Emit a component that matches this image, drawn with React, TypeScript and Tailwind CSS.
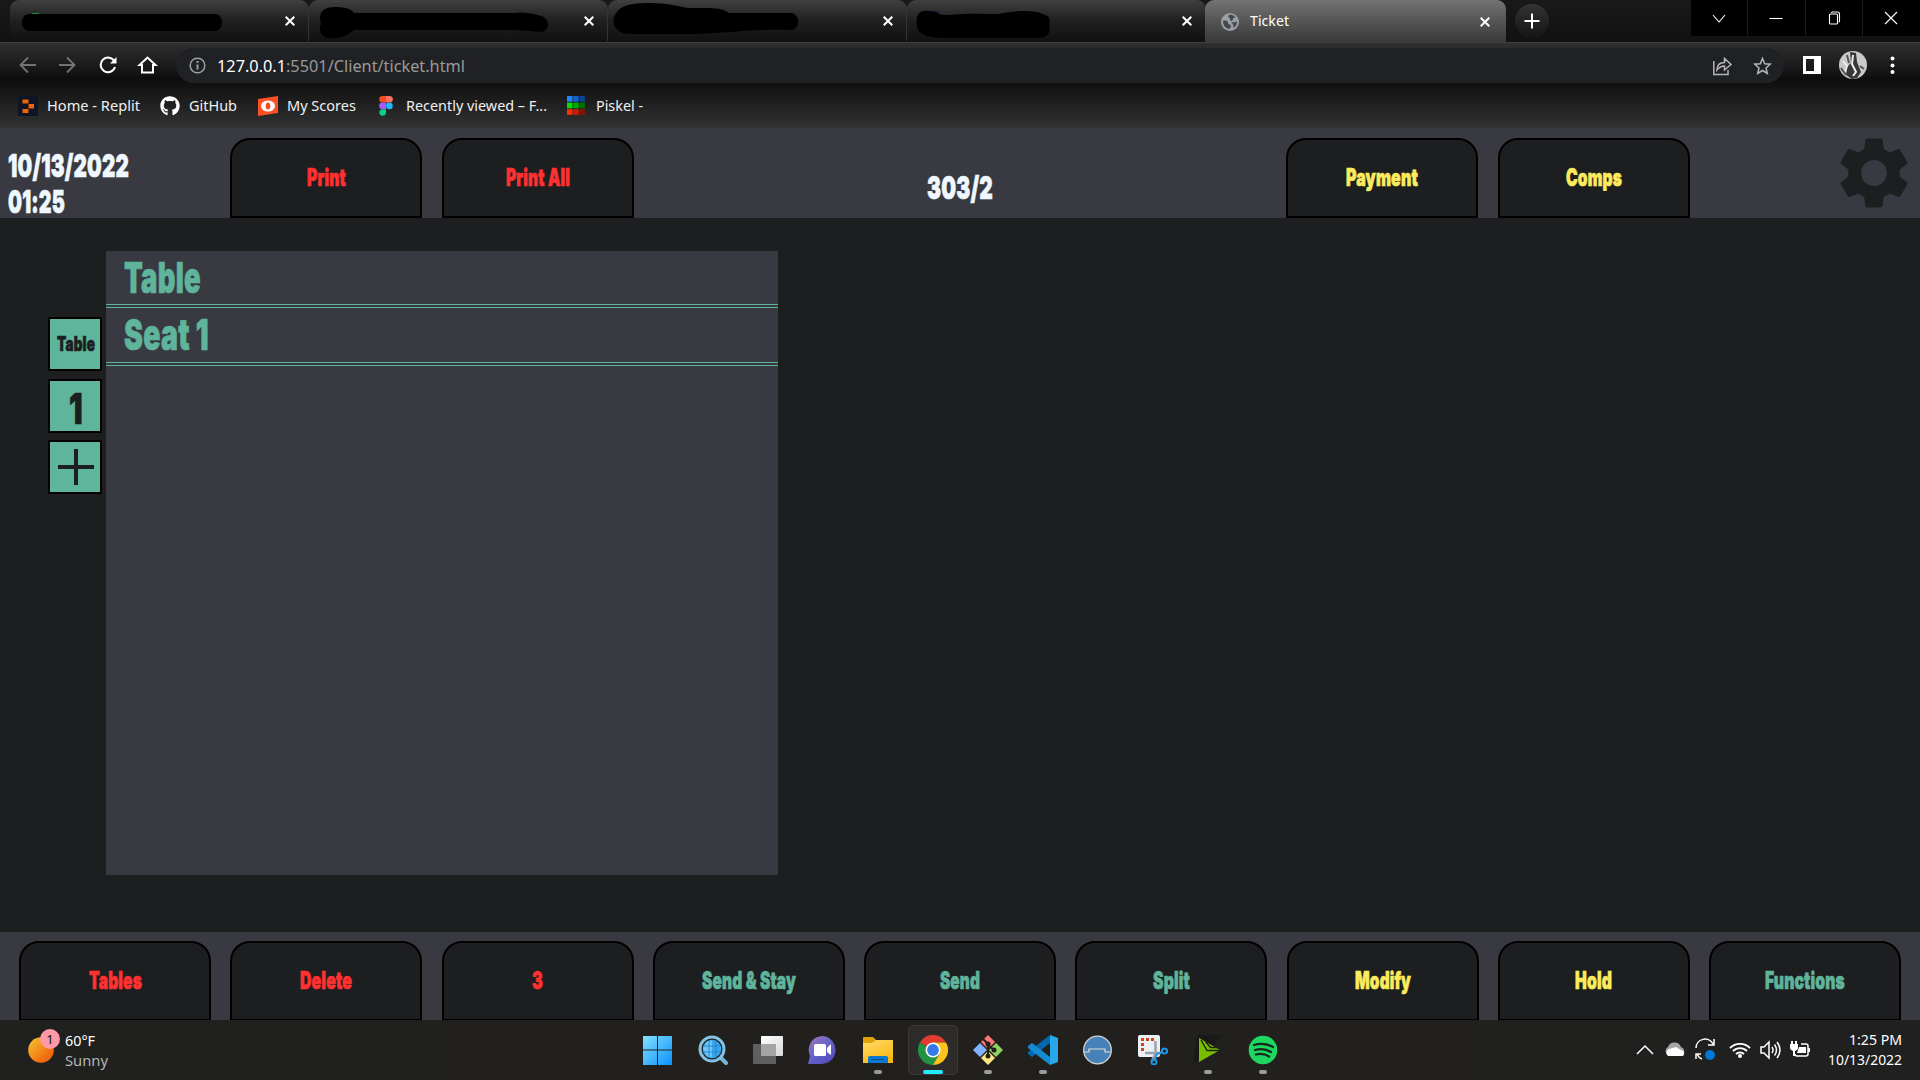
import { useLayoutEffect, useRef, type ReactNode } from "react";
import { MdSettings } from "react-icons/md";
import { FaGithub } from "react-icons/fa";

/** A single line of text, condensed or widened to an exact width. */
function Fit({ w, className = "", children }: { w: number; className?: string; children: ReactNode }) {
  const ref = useRef<HTMLSpanElement>(null);
  useLayoutEffect(() => {
    const el = ref.current;
    if (el) el.style.transform = `scaleX(${w / el.getBoundingClientRect().width})`;
    return () => {
      if (el) el.style.transform = "";
    };
  }, [w]);
  return (
    <span className={`flex shrink-0 justify-start whitespace-nowrap leading-none ${className}`} style={{ width: w }}>
      <span ref={ref} className="block shrink-0 origin-left">
        {children}
      </span>
    </span>
  );
}

const poster = "font-['Inter',sans-serif] font-black tracking-[0.01em] [-webkit-text-stroke:0.7px_currentColor]";
const ui = "font-['Noto_Sans',sans-serif]";

function Close() {
  return (
    <svg className="size-[10px] shrink-0" viewBox="0 0 10 10" stroke="#fff" strokeWidth="2">
      <path d="M.7.7l8.6 8.6M9.3.7L.7 9.3" />
    </svg>
  );
}

const scribbles = [
  "M18 14 H206 A9 9 0 0 1 206 31 H18 A9 9 0 0 1 18 14Z",
  "M26 7 C36 7 42 9 45 13 H205 C218 12 225 14 232 16 C241 18 242 31 231 32 C220 31 210 30 195 30 H45 C38 36 30 39 20 38 C10 37 10 28 12 24 C9 14 13 7 26 7Z",
  "M25 4 C50 1 65 5 80 8 C105 8 112 7 121 13 H184 A9 9 0 0 1 184 30 C145 29 120 33 90 34 H22 C-1 34 0 7 25 4Z",
  "M22 11 C30 10 30 16 42 15 C60 13 75 14 92 14 C107 10 130 10 135 14 C144 16 143 20 142 24 C145 36 138 38 130 38 H45 C12 39 8 32 10 17 C12 11 17 10 22 11Z",
];

function OldTab({ i }: { i: number }) {
  return (
    <div className="flex h-[41px] w-[299px] shrink-0 items-center justify-between rounded-t-[9px] border-r border-[#333] bg-gradient-to-b from-[#404040] via-[#202020] to-[#111] pr-[13px]">
      <svg className="h-[41px] w-[245px] shrink-0" viewBox="0 0 245 41">
        {i === 0 && <path d="M22 13h7v3h-7z" fill="#238a36" />}
        {i === 3 && <path d="M24 11h8v6h-8z" fill="#13213a" />}
        <path d={scribbles[i]} fill="#000" />
      </svg>
      <Close />
    </div>
  );
}

function TabStrip() {
  return (
    <div className="flex h-[42px] shrink-0 bg-gradient-to-b from-[#191919] to-[#111] pl-[10px]">
      {[0, 1, 2, 3].map((i) => (
        <OldTab key={i} i={i} />
      ))}
      <div className="ml-[-1px] flex h-[43px] w-[301px] shrink-0 items-center rounded-t-[9px] bg-gradient-to-b from-[#737373] to-[#383838] pl-[16px] pr-[16px]">
        <svg className="size-[18px]" viewBox="0 0 18 18">
          <circle cx="9" cy="9" r="9" fill="#9aa0a6" />
          <path d="M2 8c3-1 5 0 5 2s3 1 3 3-1 2-2 3C4 15 2 12 2 8zM8 2c3-.6 5 .5 6.500 2.500L12 5v2l-2 1-1-1V5L7 4zM10 9l4 .5L16 8c0 4-1 5-4 7 1-3 0-4-2-6z" fill="#45484b" />
        </svg>
        <Fit w={39} className={`${ui} -mt-[2px] ml-[11px] text-[15px] text-white`}>Ticket</Fit>
        <div className="ml-auto"><Close /></div>
      </div>
      <div className="ml-[9px] mt-[4px] flex size-[34px] items-center justify-center rounded-full bg-gradient-to-b from-[#333] to-[#151515]">
        <svg className="size-[16px]" viewBox="0 0 16 16" stroke="#fff" strokeWidth="2"><path d="M8 .5v15M.5 8h15" /></svg>
      </div>
      <div className="ml-auto grid h-[36px] w-[229px] grid-cols-4 divide-x divide-[#1b1b1b] bg-black">
        {["M2 5l6 7 6-7", "M1.500 8.500h13", "M3.500 5q0-1 1-1h6q1 0 1 1v8q0 1-1 1h-6q-1 0-1-1zM5.500 3q0-1 1-1h5q2 0 2 2v7q0 1-1 1", "M2 2l12 12M14 2L2 14"].map((d) => (
          <div key={d} className="flex items-center justify-center">
            <svg className="size-[16px]" viewBox="0 0 16 16" fill="none" stroke="#fff" strokeWidth="1.100"><path d={d} /></svg>
          </div>
        ))}
      </div>
    </div>
  );
}

function Toolbar() {
  return (
    <div className="flex h-[35px] shrink-0 items-start border-t border-[#414141] bg-gradient-to-b from-[#303030] to-[#101010]">
      <div className="flex h-[35px] w-[176px] items-center border-b border-[#1f1f1f] pl-[19px]">
        <svg className="h-[18px] w-[140px] translate-y-[5px]" viewBox="0 0 140 18" fill="none" strokeWidth="1.800">
          <g stroke="#747474"><path d="M17 9H2M9 1.500L1.500 9 9 16.500" /><path d="M40 9h15M48 1.500L55.500 9 48 16.500" /></g>
          <g stroke="#fff" strokeWidth="2">
            <path d="M95.500 5.500A7.300 7.300 0 1 0 96 11" />
            <path d="M97.500 1v6.500H91z" fill="#fff" stroke="none" />
            <path d="M123 16.500V9h-2.500L128.500 1.500 136.500 9H134v7.500z" />
          </g>
        </svg>
      </div>
      <div className={`relative mt-[5px] flex h-[35px] w-[1608px] items-center rounded-full bg-[#202124] pl-[13px] pr-[12px] ${ui}`}>
        <svg className="size-[17px]" viewBox="0 0 17 17" fill="none" stroke="#9aa0a6" strokeWidth="1.500"><circle cx="8.500" cy="8.500" r="7.300" /><path d="M8.500 7.500v5M8.500 4v2" strokeWidth="2" /></svg>
        <Fit w={248} className="-mt-px ml-[11px] text-[17px] text-[#9a9a9a]"><span className="text-white">127.0.0.1</span>:5501/Client/ticket.html</Fit>
        <svg className="ml-auto h-[20px] w-[60px]" viewBox="0 0 60 20" fill="none" stroke="#b5b6b8" strokeWidth="1.500">
          <path d="M1.800 5v13.500H16V14M5 14C5 9 8 6.500 12.500 6.500V2.500l6.500 6-6.500 5.500V10C9 10 7 11.500 5 14z" />
          <path d="M50.500 2.500l2.200 5.200 5.500.5-4.200 3.700 1.300 5.500-4.800-2.900-4.800 2.900 1.300-5.500-4.200-3.700 5.500-.5z" />
        </svg>
      </div>
      <div className="flex h-[35px] flex-1 items-center border-b border-[#1f1f1f] pl-[19px]">
        <svg className="h-[30px] w-[96px] translate-y-[5px]" viewBox="0 0 96 30">
          <path d="M0 6h18v18H0zM3 9v12h8V9z" fill="#fff" fillRule="evenodd" />
          <circle cx="50" cy="15" r="14" fill="#c9c9c9" />
          <path d="M47 2l6 1 1 9 4 10-4 6-5 1-6-4 1-8 4-4z" fill="#373737" />
          <path d="M50 5l-1 9 4 8-3 4M40 11l4 5-2 6" stroke="#eee" strokeWidth="2" fill="none" />
          <path d="M38 18l5 7M57 16l4 3M44 5l2 8" stroke="#555" strokeWidth="2" />
          <g fill="#fff"><circle cx="89.500" cy="8.500" r="2" /><circle cx="89.500" cy="15.500" r="2" /><circle cx="89.500" cy="22" r="2" /></g>
        </svg>
      </div>
    </div>
  );
}

function Bookmarks() {
  return (
    <div className={`flex h-[51px] shrink-0 items-center border-b border-[#343232] bg-gradient-to-b from-[#0c0c0c] to-[#323232] pl-[18px] pt-[7px] text-[15px] text-[#f0f0f0] ${ui}`}>
      <svg className="size-[20px]" viewBox="0 0 20 20"><path d="M0 0h20v20H0z" fill="#0e1525" /><path d="M4.500 3.500h6v4h-6zM10.500 8h5.500v4.500h-5.500zM4.500 13h6v4h-6z" fill="#f26207" /></svg>
      <Fit w={93} className="ml-[9px]">Home - Replit</Fit>
      <FaGithub className="ml-[20px] size-[20px] text-white" />
      <Fit w={48} className="ml-[9px]">GitHub</Fit>
      <svg className="ml-[21px] size-[20px]" viewBox="0 0 20 20"><path d="M0 3L20 0v17L0 20z" fill="#ff4f24" /><ellipse cx="10" cy="10" rx="7" ry="5.500" fill="#fff" /><ellipse cx="10" cy="10" rx="2.300" ry="3.500" fill="#f34a22" /></svg>
      <Fit w={69} className="ml-[9px]">My Scores</Fit>
      <svg className="ml-[23px] h-[20px] w-[14px]" viewBox="0 0 14 20"><path d="M7 0H3.500a3.300 3.300 0 0 0 0 6.600H7z" fill="#f24e1e" /><path d="M7 0h3.500a3.300 3.300 0 0 1 0 6.600H7z" fill="#ff7262" /><path d="M7 6.600H3.500a3.300 3.300 0 0 0 0 6.600H7z" fill="#a259ff" /><circle cx="10.400" cy="9.900" r="3.300" fill="#1abcfe" /><path d="M7 13.200H3.500A3.300 3.300 0 1 0 7 16.600z" fill="#0acf83" /></svg>
      <Fit w={141} className="ml-[13px]">Recently viewed – F...</Fit>
      <svg className="ml-[20px] h-[19px] w-[18px]" viewBox="0 0 18 19">
        {["#1d83ff", "#1262cf", "#0b4491", "#00e000", "#00aa00", "#007000", "#ff2c05", "#c81f00", "#841600"].map((c, i) => (
          <path key={c} d={`M${(i % 3) * 6.2} ${Math.floor(i / 3) * 6.600}h5.500v5.700h-5.500z`} fill={c} />
        ))}
      </svg>
      <Fit w={47} className="ml-[11px]">Piskel -</Fit>
    </div>
  );
}

function Key({ label, w, color }: { label: string; w: number; color: string }) {
  return (
    <button className={`flex h-[80px] w-[192px] shrink-0 items-center justify-center rounded-t-[20px] border-2 border-black bg-[#1d1e20] text-[24px] ${poster} ${color}`}>
      <Fit w={w}>{label}</Fit>
    </button>
  );
}

const red = "text-[#ff3131]";
const green = "text-[#5fb49c]";
const yellow = "text-[#fcec5d]";

function Header() {
  return (
    <header className="flex h-[90px] shrink-0 bg-[#393a41] pt-[10px]">
      <div className={`w-[230px] pl-[8px] pt-[12px] text-[32px] text-[#f0f8ff] ${poster}`}>
        <Fit w={121} className="mb-[4px]">10/13/2022</Fit>
        <Fit w={57}>01:25</Fit>
      </div>
      <div className="flex gap-[19.5px]">
        <Key label="Print" w={39} color={red} />
        <Key label="Print All" w={64} color={red} />
      </div>
      <div className={`flex w-[652.500px] justify-center pt-[34px] text-[32px] text-[#f0f8ff] ${poster}`}>
        <Fit w={66}>303/2</Fit>
      </div>
      <div className="flex gap-[19.5px]">
        <Key label="Payment" w={72} color={yellow} />
        <Key label="Comps" w={56} color={yellow} />
      </div>
      <MdSettings className="-mt-[8px] ml-[141px] size-[86px] shrink-0 text-[#1d1e20]" />
    </header>
  );
}

function SeatButton({ children }: { children: ReactNode }) {
  return <button className="flex size-[54px] items-center justify-center border-2 border-black bg-[#5fb49c] pl-[2px] text-[#1d1e20]">{children}</button>;
}

function Ticket() {
  return (
    <main className="flex h-[714px] shrink-0 bg-[#1d1e20] pl-[48px]">
      <div className="flex w-[58px] flex-col gap-[7.5px] pt-[99px]">
        <SeatButton><Fit w={38} className={`text-[20px] ${poster}`}>Table</Fit></SeatButton>
        <SeatButton><Fit w={14} className={`pt-[5px] text-[43px] ${poster}`}>1</Fit></SeatButton>
        <SeatButton>
          <svg className="size-[36px]" viewBox="0 0 36 36" stroke="#1d1e20" strokeWidth="4"><path d="M18 0v36M0 18h36" /></svg>
        </SeatButton>
      </div>
      <section className={`mt-[33px] h-[624px] w-[672px] bg-[#393a41] text-[43px] text-[#5fb49c] ${poster}`}>
        <div className="h-[57px] border-b-4 border-double border-[#5fb49c] pl-[18px] pt-[5px]"><Fit w={77}>Table</Fit></div>
        <div className="h-[58px] border-b-4 border-double border-[#5fb49c] pl-[18px] pt-[5px]"><Fit w={85}>Seat 1</Fit></div>
      </section>
    </main>
  );
}

const keys: [string, number, string][] = [
  ["Tables", 53, red],
  ["Delete", 52, red],
  ["3", 11, red],
  ["Send & Stay", 94, green],
  ["Send", 40, green],
  ["Split", 37, green],
  ["Modify", 56, yellow],
  ["Hold", 37, yellow],
  ["Functions", 80, green],
];

function Task({ bar, children }: { bar?: "open" | "active"; children: ReactNode }) {
  return (
    <div className={`relative flex h-[50px] w-[50px] items-center justify-center rounded-[5px] ${bar === "active" ? "border border-[#393836] bg-[#2d2c2b]" : ""}`}>
      <svg className="size-[30px]" viewBox="0 0 30 30">{children}</svg>
      {bar === "open" && <span className="absolute bottom-[1px] left-[21px] h-[4px] w-[8px] rounded-full bg-[#9b9b9b]" />}
      {bar === "active" && <span className="absolute bottom-0 left-[14px] h-[4px] w-[20px] rounded-full bg-[#22ebff]" />}
    </div>
  );
}

function Taskbar() {
  return (
    <footer className="flex h-[60px] shrink-0 bg-gradient-to-r from-[#20201f] via-[#22201d] to-[#202020] font-['Noto_Sans',sans-serif] text-[14.5px] text-white">
      <div className="flex w-[633px] pl-[28px] pt-[8px]">
        <svg className="h-[36px] w-[34px]" viewBox="0 0 34 36">
          <defs><linearGradient id="sun" x2="1" y2="1"><stop stopColor="#f7c92f" /><stop offset=".75" stopColor="#f06a0e" /></linearGradient></defs>
          <circle cx="13" cy="22" r="12.800" fill="url(#sun)" />
          <circle cx="22" cy="11" r="10" fill="#ff99a4" />
          <text x="22" y="16" textAnchor="middle" fontFamily="Noto Sans" fontSize="13" fill="#111">1</text>
        </svg>
        <div className="ml-[3px] pt-[5px]">
          <Fit w={30} className="mb-[5.500px]">60°F</Fit>
          <Fit w={43} className="text-[#b5b5b5]">Sunny</Fit>
        </div>
      </div>
      <div className="flex gap-[5px] pt-[5px]">
        <Task>
          <defs><linearGradient id="win" x2="1" y2="1"><stop stopColor="#85e0ff" /><stop offset="1" stopColor="#0a92fa" /></linearGradient></defs>
          <path d="M0 1h14v13.500H0zM15 1h14v13.500H15zM0 15.500h14V30H0zM15 15.500h14V30H15z" fill="url(#win)" />
        </Task>
        <Task>
          <path d="M22 22l6 6" stroke="#76b4d6" strokeWidth="4" strokeLinecap="round" />
          <circle cx="14" cy="14" r="12" fill="#1b1f24" stroke="#82c1df" strokeWidth="3" />
          <circle cx="14" cy="14" r="9.300" fill="#37a6ee" />
          <path d="M9 6h5v16H9l-4-8zM14 5v6H6z" fill="#9ce0f8" opacity=".55" />
          <path d="M5 11h18M5 17h18M11 5v18M18 5v18" stroke="#1d7fc4" strokeWidth=".8" />
        </Task>
        <Task>
          <defs><linearGradient id="tv" x2="1" y2="1"><stop stopColor="#fff" /><stop offset="1" stopColor="#d8d8d8" /></linearGradient></defs>
          <rect x="8" y="1" width="22" height="20" rx="1" fill="url(#tv)" />
          <rect x="0" y="9" width="23" height="20" rx="1" fill="#5f5f5f" />
          <path d="M8 9h15v12H8z" fill="#a5a5a5" />
        </Task>
        <Task>
          <defs><linearGradient id="chat" x2=".8" y2="1"><stop stopColor="#a776b6" /><stop offset=".5" stopColor="#6765cb" /><stop offset="1" stopColor="#504bbd" /></linearGradient></defs>
          <path d="M15 1a14 14 0 1 1-3 28H0l2-8A14 14 0 0 1 15 1z" fill="url(#chat)" />
          <rect x="6" y="9" width="12" height="12" rx="1.500" fill="#fff" /><path d="M19 13l4-4v11l-4-3z" fill="#fff" />
        </Task>
        <Task bar="open">
          <defs><linearGradient id="fold" x2=".6" y2="1"><stop stopColor="#ffdc6b" /><stop offset="1" stopColor="#fcb913" /></linearGradient></defs>
          <path d="M0 3q0-1 1-1h9l3 3v5H0z" fill="#dfa20b" />
          <path d="M0 8h9l4-3h17v23H0z" fill="url(#fold)" />
          <path d="M5 28v-5q0-2 2-2h16q2 0 2 2v5z" fill="#0c79cf" /><path d="M8 24.500h13" stroke="#08518e" />
        </Task>
        <Task bar="active">
          <path d="M15 15L2 7.500A15 15 0 0 1 28 7.500H15z" fill="#e33b2e" />
          <path d="M15 15L2 7.500A15 15 0 0 0 15 30l6.500-11.300z" fill="#229342" />
          <path d="M15 15l6.500 3.700L15 30A15 15 0 0 0 28 7.500H15z" fill="#fcc31e" />
          <circle cx="15" cy="15" r="7.500" fill="#fff" /><circle cx="15" cy="15" r="5.900" fill="#357ae8" />
        </Task>
        <Task bar="open">
          <path d="M15 0l7 7-7 7-7-7z" fill="#ff7677" /><path d="M7 8l7 7-7 7-7-7z" fill="#80b3ff" /><path d="M23 8l7 7-7 7-7-7z" fill="#8dd35f" /><path d="M15 16l7 7-7 7-7-7z" fill="#ffe680" />
          <path d="M10 4l5 5v12M15 10l6 5" stroke="#241f1c" strokeWidth="2" fill="none" /><g fill="#241f1c"><circle cx="15" cy="9" r="2.500" /><circle cx="15" cy="21" r="2.500" /><circle cx="21" cy="15" r="2.500" /></g>
        </Task>
        <Task bar="open">
          <path d="M22 0l8 3v24l-8 3z" fill="#28a8ea" />
          <path d="M22 0v8L4 22l-4-3v-2z" fill="#0067b1" /><path d="M22 30v-8L4 8l-4 3v2z" fill="#168bd3" />
        </Task>
        <Task>
          <circle cx="14.500" cy="15" r="13.800" fill="#4682b8" stroke="#d5d2cf" strokeWidth="1.300" />
          <path d="M1 17h5v-3h16v3h6" stroke="#e1ddd6" fill="none" strokeWidth="1.200" />
        </Task>
        <Task>
          <rect x="0" y="0" width="22" height="22" rx="2" fill="#eceff4" />
          <path d="M4.500 16V4.500H16" fill="none" stroke="#d9400e" strokeWidth="3" strokeDasharray="3 2" />
          <path d="M17.500 6v12.500L14 26M7 18h16" stroke="#9aa3ad" strokeWidth="2.500" fill="none" />
          <circle cx="26.500" cy="16" r="2.600" fill="none" stroke="#1e97e6" strokeWidth="2" /><circle cx="16" cy="27" r="2.500" fill="none" stroke="#1e97e6" strokeWidth="2" /><path d="M17 24l2-5 5-2" stroke="#1e97e6" strokeWidth="2" fill="none" />
        </Task>
        <Task bar="open">
          <path d="M4 0h26L0 30z" fill="#191919" />
          <path d="M6 3l21 12L6 27z" fill="#79bd00" /><path d="M8 5l6 10.500h13M12.500 6.500l5 6h8" stroke="#1c230d" strokeWidth="1.400" fill="none" />
        </Task>
        <Task bar="open">
          <circle cx="15" cy="15" r="14.300" fill="#1ed760" />
          <path d="M6 10q10-3 19 2M7 15q9-2.500 16 2M8 19.500q7-2 13 2" fill="none" stroke="#17281c" strokeWidth="2.300" strokeLinecap="round" />
        </Task>
      </div>
      <div className="ml-auto flex pr-[18px] pt-[18px]">
        <svg className="h-[24px] w-[176px]" viewBox="0 0 176 24" fill="none" stroke="#fff" strokeWidth="1.500">
          <path d="M1 16l8-8 8 8" />
          <path d="M33 18a5 5 0 0 1-1-9 7 7 0 0 1 13 0 5 5 0 0 1 1 9z" fill="#a5a5a5" stroke="none" /><path d="M32 18a4 4 0 0 1 1-7l7-2 5 3a3.500 3.500 0 0 1 2 6z" fill="#fff" stroke="none" />
          <path d="M60 10a9 9 0 0 1 17-4M78 1v6h-6M66 21a9 9 0 0 1-5-5M60 21v-5h5" /><circle cx="74" cy="17" r="5" fill="#0078d7" stroke="none" />
          <path d="M94 10a14 14 0 0 1 20 0M97 13a10 10 0 0 1 14 0M100 16a6 6 0 0 1 8 0" strokeWidth="1.800" /><circle cx="104" cy="18" r="2" fill="#fff" stroke="none" />
          <path d="M125 9h3l5-5v16l-5-5h-3zM136 9q2 3 0 6M138.500 6.500q4 5.500 0 11M141 4q6 8 0 16" />
          <path d="M165 6h5q2 0 2 2v8q0 2-2 2h-9q-2 0-2-2" /><path d="M163 9h7v6h-9z" fill="#fff" stroke="none" /><path d="M173 10v4M156 3v4M160 3v4" strokeWidth="2" /><path d="M154 6h8v4q0 2-3 3v5h-2v-5q-3-1-3-3z" fill="#fff" stroke="none" />
        </svg>
        <div className="-mt-[6px] ml-[16px] flex w-[74px] flex-col items-end gap-[5px]">
          <Fit w={53}>1:25 PM</Fit>
          <Fit w={74}>10/13/2022</Fit>
        </div>
      </div>
    </footer>
  );
}

export default function App() {
  return (
    <div className="flex h-[1080px] w-[1920px] flex-col overflow-hidden bg-[#1d1e20]">
      <TabStrip />
      <Toolbar />
      <Bookmarks />
      <Header />
      <Ticket />
      <nav className="flex h-[88px] shrink-0 justify-between overflow-hidden bg-[#393a41] px-[19px] pt-[9px]">
        {keys.map(([label, w, color]) => (
          <Key key={label} label={label} w={w} color={color} />
        ))}
      </nav>
      <Taskbar />
    </div>
  );
}
